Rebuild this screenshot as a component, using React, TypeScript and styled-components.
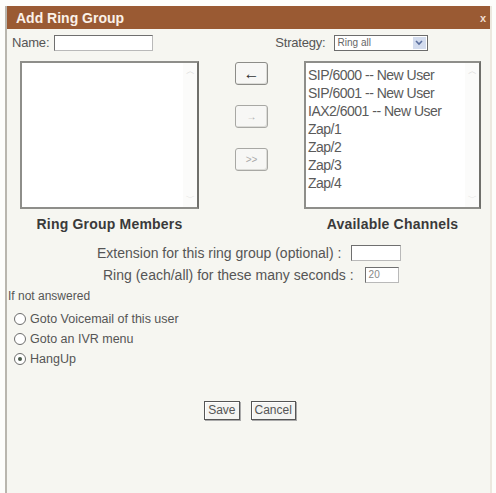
import React from "react";
import styled, { createGlobalStyle } from "styled-components";

const GlobalStyle = createGlobalStyle`
  html, body {
    margin: 0;
    padding: 0;
    background: #ffffff;
    font-family: "Liberation Sans", Arial, sans-serif;
  }
`;

const Page = styled.div`
  width: 496px;
  height: 493px;
  padding-top: 6px;
  box-sizing: border-box;
  background: #fdfdfb;
`;

const Dialog = styled.div`
  margin-left: 5px;
  width: 487px;
  height: 487px;
  box-sizing: border-box;
  background: #f6f6f1;
  border-left: 2px solid #b9b6ae;
  border-right: 2px solid #ece8df;
  display: flex;
  flex-direction: column;
`;

const TitleBar = styled.div`
  height: 23px;
  background: #9a5a33;
  display: flex;
  align-items: center;
  justify-content: space-between;
  padding: 0 4px 0 9px;
  color: #fbf1e8;
  font-weight: bold;
  font-size: 14px;
`;

const Close = styled.span`
  font-size: 11px;
  color: #f0ddd0;
`;

const Body = styled.div`
  color: #555;
  font-size: 13px;
`;

const TopRow = styled.div`
  display: flex;
  align-items: center;
  height: 27px;
  padding-left: 5px;
`;

const Label = styled.span`
  color: #555;
  font-size: 13px;
  letter-spacing: -0.2px;
`;

const Spacer = styled.span<{ w: number }>`
  display: inline-block;
  flex: none;
  width: ${(p) => p.w}px;
`;

const TextBox = styled.div<{ w: number }>`
  width: ${(p) => p.w}px;
  height: 14px;
  border: 1px solid #6f6f6f;
  border-right-color: #b9b9b9;
  border-bottom-color: #b9b9b9;
  background: #fff;
  font-size: 10px;
  color: #888;
  line-height: 14px;
  padding-left: 3px;
  box-sizing: content-box;
  flex: none;
`;

const Select = styled.div`
  width: 92px;
  height: 14px;
  border: 1px solid #6c6c6c;
  background: #fff;
  display: flex;
  align-items: center;
  font-size: 10px;
  color: #666;
  margin-left: 8px;
`;

const SelectText = styled.span`
  flex: 1;
  padding-left: 3px;
`;

const SelectArrow = styled.span`
  width: 13px;
  height: 12px;
  margin-right: 1px;
  background: #d3dcee;
  display: flex;
  align-items: center;
  justify-content: center;
`;

const ListsRow = styled.div`
  display: flex;
  padding-left: 13px;
  margin-top: 5px;
`;

const ListBox = styled.div<{ w: number }>`
  width: ${(p) => p.w}px;
  height: 148px;
  box-sizing: border-box;
  border: 2px solid #8e8e8a;
  border-right-color: #6f6f6b;
  background: #fff;
  display: flex;
`;

const Options = styled.div`
  flex: 1;
  padding: 3px 0 0 2px;
`;

const Option = styled.div`
  font-size: 14px;
  line-height: 18px;
  color: #5a5a5a;
  letter-spacing: -0.5px;
  white-space: nowrap;
`;

const Scroll = styled.div`
  width: 14px;
  background: #fbfbfa;
  display: flex;
  flex-direction: column;
  justify-content: space-between;
  align-items: center;
  color: #d6d6d6;
  font-size: 9px;
  padding: 2px 0;
`;

const MoveColumn = styled.div`
  width: 105px;
  display: flex;
  flex-direction: column;
  align-items: center;
  padding-top: 1px;
  gap: 20px;
`;

const MoveButton = styled.div<{ dim?: boolean }>`
  width: 31px;
  height: 21px;
  border: 1px solid ${(p) => (p.dim ? "#a8a8a4" : "#8c8c88")};
  border-radius: 3px;
  background: #f7f7f5;
  display: flex;
  align-items: center;
  justify-content: center;
  color: ${(p) => (p.dim ? "#aaa" : "#333")};
  font-size: ${(p) => (p.dim ? 10 : 16)}px;
  font-weight: ${(p) => (p.dim ? "normal" : "bold")};
  box-shadow: inset -1px -1px 0 #dcdcd8;
`;

const CaptionRow = styled.div`
  display: flex;
  padding-left: 13px;
  margin-top: 7px;
`;

const Caption = styled.div<{ w: number; ml?: number }>`
  width: ${(p) => p.w}px;
  margin-left: ${(p) => p.ml || 0}px;
  text-align: center;
  font-weight: bold;
  font-size: 14px;
  line-height: 16px;
  color: #3a3a3a;
  letter-spacing: 0.2px;
  white-space: nowrap;
`;

const FieldRow = styled.div<{ pl: number; mt: number }>`
  display: flex;
  align-items: center;
  height: 17px;
  padding-left: ${(p) => p.pl}px;
  margin-top: ${(p) => p.mt}px;
  font-size: 14px;
  color: #555;
  white-space: nowrap;
`;

const Small = styled.div`
  font-size: 12px;
  line-height: 15px;
  color: #555;
  margin-top: 6px;
  padding-left: 1px;
`;

const RadioList = styled.div`
  display: flex;
  flex-direction: column;
  gap: 4px;
  padding-left: 7px;
  margin-top: 7px;
`;

const RadioRow = styled.div`
  display: flex;
  align-items: center;
  font-size: 12.5px;
  color: #555;
  height: 16px;
`;

const Radio = styled.span<{ on?: boolean }>`
  width: 10px;
  height: 10px;
  border: 1px solid #6d6d6d;
  border-radius: 50%;
  background: #fff;
  margin-right: 4px;
  display: flex;
  align-items: center;
  justify-content: center;
  &::after {
    content: "";
    width: 4px;
    height: 4px;
    border-radius: 50%;
    background: ${(p) => (p.on ? "#4a5a4a" : "transparent")};
  }
`;

const Buttons = styled.div`
  display: flex;
  justify-content: center;
  gap: 11px;
  margin-top: 34px;
  padding-left: 3px;
`;

const PushButton = styled.div`
  height: 17px;
  padding: 0 3px;
  border: 1px solid #555;
  box-shadow: inset 1px 1px 0 #fff, 1px 1px 0 #aaa;
  background: #f4f4f2;
  font-size: 12px;
  color: #555;
  line-height: 17px;
`;

const channels = [
  "SIP/6000 -- New User",
  "SIP/6001 -- New User",
  "IAX2/6001 -- New User",
  "Zap/1",
  "Zap/2",
  "Zap/3",
  "Zap/4",
];

function ScrollBar() {
  return (
    <Scroll>
      <span>︿</span>
      <span>﹀</span>
    </Scroll>
  );
}

export default function App() {
  return (
    <>
      <GlobalStyle />
      <Page>
        <Dialog>
          <TitleBar>
            <span>Add Ring Group</span>
            <Close>x</Close>
          </TitleBar>
          <Body>
            <TopRow>
              <Label>Name:</Label>
              <Spacer w={5} />
              <TextBox w={94} />
              <Spacer w={122} />
              <Label>Strategy:</Label>
              <Select>
                <SelectText>Ring all</SelectText>
                <SelectArrow>
                  <svg width="8" height="6" viewBox="0 0 8 6">
                    <path d="M1 1 L4 4 L7 1" stroke="#5b6f9e" strokeWidth="1.6" fill="none" />
                  </svg>
                </SelectArrow>
              </Select>
            </TopRow>
            <ListsRow>
              <ListBox w={179}>
                <Options />
                <ScrollBar />
              </ListBox>
              <MoveColumn>
                <MoveButton>&#8592;</MoveButton>
                <MoveButton dim>&#8594;</MoveButton>
                <MoveButton dim>&gt;&gt;</MoveButton>
              </MoveColumn>
              <ListBox w={177}>
                <Options>
                  {channels.map((c) => (
                    <Option key={c}>{c}</Option>
                  ))}
                </Options>
                <ScrollBar />
              </ListBox>
            </ListsRow>
            <CaptionRow>
              <Caption w={179}>Ring Group Members</Caption>
              <Caption w={177} ml={105}>Available Channels</Caption>
            </CaptionRow>
            <FieldRow pl={90} mt={12}>
              Extension for this ring group (optional) :
              <Spacer w={10} />
              <TextBox w={45} />
            </FieldRow>
            <FieldRow pl={96} mt={5}>
              Ring (each/all) for these many seconds :
              <Spacer w={11} />
              <TextBox w={29}>20</TextBox>
            </FieldRow>
            <Small>If not answered</Small>
            <RadioList>
              <RadioRow>
                <Radio />
                Goto Voicemail of this user
              </RadioRow>
              <RadioRow>
                <Radio />
                Goto an IVR menu
              </RadioRow>
              <RadioRow>
                <Radio on />
                HangUp
              </RadioRow>
            </RadioList>
            <Buttons>
              <PushButton>Save</PushButton>
              <PushButton>Cancel</PushButton>
            </Buttons>
          </Body>
        </Dialog>
      </Page>
    </>
  );
}
